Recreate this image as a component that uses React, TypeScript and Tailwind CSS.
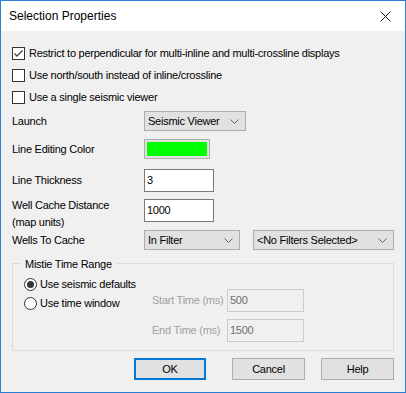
import React from "react";

function Checkbox({ checked = false }: { checked?: boolean }) {
  return (
    <span className="w-[13px] h-[13px] border border-[#333333] bg-white flex items-center justify-center shrink-0">
      {checked && (
        <svg width="11" height="11" viewBox="0 0 11 11">
          <path d="M1.5 5.5 L4 8 L9.5 2.5" fill="none" stroke="#444444" strokeWidth="1.3" />
        </svg>
      )}
    </span>
  );
}

function Radio({ checked = false }: { checked?: boolean }) {
  return (
    <span className="w-[13px] h-[13px] rounded-full border border-[#333333] bg-white flex items-center justify-center shrink-0">
      {checked && <span className="w-[7px] h-[7px] rounded-full bg-[#333333]" />}
    </span>
  );
}

function Chevron() {
  return (
    <svg width="9" height="5" viewBox="0 0 9 5" className="shrink-0">
      <path d="M0.5 0.5 L4.5 4.5 L8.5 0.5" fill="none" stroke="#606060" strokeWidth="1" />
    </svg>
  );
}

function Combo({ value, className }: { value: string; className: string }) {
  return (
    <div
      className={
        "h-[20px] bg-[#e1e1e1] border border-[#adadad] flex items-center justify-between pl-[3px] pr-[6px] " +
        className
      }
    >
      <span>{value}</span>
      <Chevron />
    </div>
  );
}

function Input({ value, disabled = false }: { value: string; disabled?: boolean }) {
  return (
    <div
      className={
        disabled
          ? "w-[77px] h-[23px] border border-[#cccccc] bg-[#f0f0f0] text-[#6d6d6d] flex items-center pl-[2px]"
          : "w-[70px] h-[23px] border border-[#7a7a7a] bg-white flex items-center pl-[2px]"
      }
    >
      {value}
    </div>
  );
}

function Button({ label, primary = false }: { label: string; primary?: boolean }) {
  return (
    <div
      className={
        "w-[73px] h-[22px] bg-[#e1e1e1] flex items-center justify-center " +
        (primary ? "border-2 border-[#0078d7]" : "border border-[#adadad]")
      }
    >
      {label}
    </div>
  );
}

export default function App() {
  return (
    <div
      className="w-[406px] h-[393px] border border-[#2b7fd3] bg-[#f0f0f0] flex flex-col text-[11px] text-black"
      style={{ fontFamily: '"Liberation Sans", Arial, sans-serif' }}
    >
      <div className="h-[30px] bg-white flex items-center justify-between pl-[8px] pr-[14px] shrink-0">
        <span className="text-[12px]">Selection Properties</span>
        <svg width="11" height="11" viewBox="0 0 11 11">
          <path d="M0.5 0.5 L10.5 10.5 M10.5 0.5 L0.5 10.5" stroke="#111111" strokeWidth="1" />
        </svg>
      </div>

      <div className="flex flex-col pl-[11px] pr-[11px] pt-[11px] tracking-[-0.25px]">
        <div className="h-[22px] flex items-center gap-[4px]">
          <Checkbox checked />
          <span>Restrict to perpendicular for multi-inline and multi-crossline displays</span>
        </div>
        <div className="h-[22px] flex items-center gap-[4px]">
          <Checkbox />
          <span>Use north/south instead of inline/crossline</span>
        </div>
        <div className="h-[22px] flex items-center gap-[4px]">
          <Checkbox />
          <span>Use a single seismic viewer</span>
        </div>

        <div className="grid grid-cols-[132px_1fr] items-center mt-[2px]">
          <div className="h-[22px] flex items-center">Launch</div>
          <div className="h-[22px] flex items-center">
            <Combo value="Seismic Viewer" className="w-[102px]" />
          </div>

          <div className="h-[22px] flex items-center mt-[6px]">Line Editing Color</div>
          <div className="h-[22px] flex items-center mt-[6px]">
            <div className="w-[66px] h-[20px] border border-[#adadad] bg-[#e1e1e1] p-[2px]">
              <div className="w-full h-full bg-[#00ff00]" />
            </div>
          </div>

          <div className="h-[24px] flex items-center mt-[8px]">Line Thickness</div>
          <div className="h-[24px] flex items-center mt-[8px]">
            <Input value="3" />
          </div>

          <div className="h-[30px] flex flex-col justify-between mt-[7px] leading-[13px]">
            <span>Well Cache Distance</span>
            <span>(map units)</span>
          </div>
          <div className="h-[30px] flex items-start mt-[7px]">
            <Input value="1000" />
          </div>

          <div className="h-[20px] flex items-center mt-[1px]">Wells To Cache</div>
          <div className="h-[20px] flex items-center gap-[13px] mt-[1px]">
            <Combo value="In Filter" className="w-[96px]" />
            <Combo value="<No Filters Selected>" className="w-[141px]" />
          </div>
        </div>

        <div className="relative mt-[13px] h-[88px] border border-[#dcdcdc] flex flex-col pt-[12px] pl-[11px]">
          <span className="absolute -top-[8px] left-[7px] bg-[#f0f0f0] px-[5px]">Mistie Time Range</span>
          <div className="h-[16px] flex items-center gap-[3px]">
            <Radio checked />
            <span>Use seismic defaults</span>
          </div>
          <div className="flex items-start mt-[1px]">
            <div className="w-[128px] h-[20px] flex items-center gap-[3px]">
              <Radio />
              <span>Use time window</span>
            </div>
            <div className="grid grid-cols-[75px_auto] items-center gap-y-[7px] text-[#a0a0a0] -mt-[4px]">
              <span className="whitespace-nowrap">Start Time (ms)</span>
              <Input value="500" disabled />
              <span className="whitespace-nowrap">End Time (ms)</span>
              <Input value="1500" disabled />
            </div>
          </div>
        </div>

        <div className="flex mt-[7px] pl-[122px]">
          <Button label="OK" primary />
          <div className="ml-[26px]">
            <Button label="Cancel" />
          </div>
          <div className="ml-[16px]">
            <Button label="Help" />
          </div>
        </div>
      </div>
    </div>
  );
}
